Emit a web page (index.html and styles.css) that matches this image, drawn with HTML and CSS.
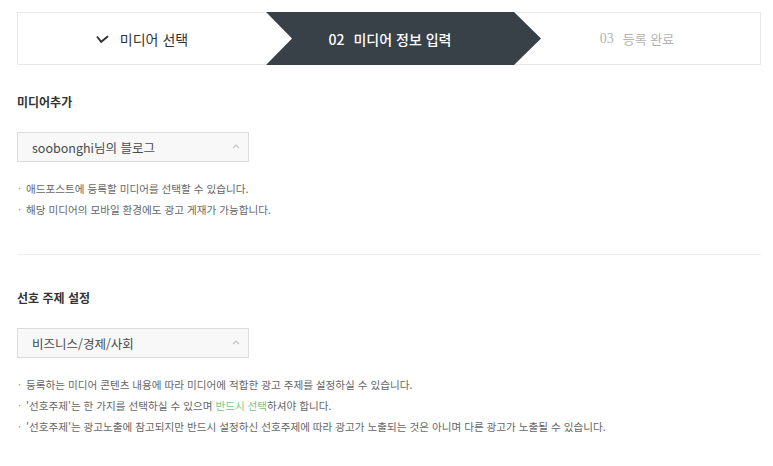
FILE: index.html
```html
<!DOCTYPE html>
<html lang="ko">
<head>
<meta charset="utf-8">
<title>미디어 정보 입력</title>
<link rel="stylesheet" href="styles.css">
</head>
<body>
<div class="page">
  <div class="steps">
    <div class="step step-done">
      <svg class="check" width="13" height="9" viewBox="0 0 13 9"><path d="M1 1.5 L5.2 6.8 L12 1.2" fill="none" stroke="#333" stroke-width="1.9"/></svg>
      <span>미디어 선택</span>
    </div>
    <div class="step step-current"><span class="num">02</span><span>미디어 정보 입력</span></div>
    <div class="step step-next"><span class="num serif">03</span><span>등록 완료</span></div>
  </div>

  <section class="section first">
    <h2 class="heading">미디어추가</h2>
    <div class="select">
      <span>soobonghi님의 블로그</span>
      <svg class="caret" width="8" height="5" viewBox="0 0 8 5"><path d="M1 4 L4 1 L7 4" fill="none" stroke="#c4c4c4" stroke-width="1.2"/></svg>
    </div>
    <ul class="notes">
      <li>애드포스트에 등록할 미디어를 선택할 수 있습니다.</li>
      <li>해당 미디어의 모바일 환경에도 광고 게재가 가능합니다.</li>
    </ul>
  </section>

  <hr class="divider">

  <section class="section second">
    <h2 class="heading">선호 주제 설정</h2>
    <div class="select">
      <span>비즈니스/경제/사회</span>
      <svg class="caret" width="8" height="5" viewBox="0 0 8 5"><path d="M1 4 L4 1 L7 4" fill="none" stroke="#c4c4c4" stroke-width="1.2"/></svg>
    </div>
    <ul class="notes">
      <li>등록하는 미디어 콘텐츠 내용에 따라 미디어에 적합한 광고 주제를 설정하실 수 있습니다.</li>
      <li>'선호주제'는 한 가지를 선택하실 수 있으며 <em class="green">반드시 선택</em>하셔야 합니다.</li>
      <li>'선호주제'는 광고노출에 참고되지만 반드시 설정하신 선호주제에 따라 광고가 노출되는 것은 아니며 다른 광고가 노출될 수 있습니다.</li>
    </ul>
  </section>
</div>
</body>
</html>
```
FILE: styles.css
```css
* { box-sizing: border-box; }
html, body { margin: 0; padding: 0; background: #fff; }
body {
  font-family: "Noto Sans CJK KR", "Noto Sans", sans-serif;
  color: #333;
}
.page {
  padding: 12px 12px 0 17px;
  width: 773px;
}
.steps {
  display: flex;
  width: 744px;
  height: 53px;
}
.step {
  display: flex;
  align-items: center;
  justify-content: center;
  height: 53px;
  font-size: 14px;
  line-height: 20px;
}
.step-done {
  width: 249px;
  border: 1px solid #e8e8e8;
  border-right: 0;
  color: #333;
}
.check { margin-right: 11px; margin-top: 1px; }
.step-current {
  width: 275px;
  margin-right: -27px;
  padding-right: 27px;
  background: #394148;
  color: #fff;
  font-weight: 500;
  position: relative;
  z-index: 1;
  clip-path: polygon(0 0, 248px 0, 100% 50%, 248px 100%, 0 100%, 26px 50%);
}
.step-next {
  flex: 1;
  border: 1px solid #e8e8e8;
  border-left: 0;
  color: #b3b3b3;
  font-size: 13px;
}
.num { margin-right: 9px; }
.serif { font-family: "Liberation Serif", serif; font-size: 14px; }
.section { margin: 0; }
.section.first { padding-top: 27px; }
.section.second { padding-top: 33px; }
.heading {
  margin: 0 0 20px;
  font-size: 12px;
  line-height: 20px;
  font-weight: 700;
  color: #333;
}
.select {
  display: flex;
  align-items: center;
  justify-content: space-between;
  width: 232px;
  height: 30px;
  padding: 0 8px 0 14px;
  border: 1px solid #dcdcdc;
  background: #f8f8f8;
  font-size: 12.5px;
  color: #4a4a4a;
}
.caret { margin-bottom: 1px; }
.notes {
  list-style: none;
  margin: 16px 0 0;
  padding: 0;
  font-size: 10.6px;
  line-height: 21px;
  color: #666;
}
.notes li { padding-left: 9px; position: relative; }
.notes li::before {
  content: "·";
  position: absolute;
  left: 1px;
  top: 0;
  color: #999;
}
.green { font-style: normal; color: #7cc47c; }
.divider {
  margin: 34px 0 0;
  width: 744px;
  border: 0;
  border-top: 1px solid #eeeeee;
  height: 0;
}
```
